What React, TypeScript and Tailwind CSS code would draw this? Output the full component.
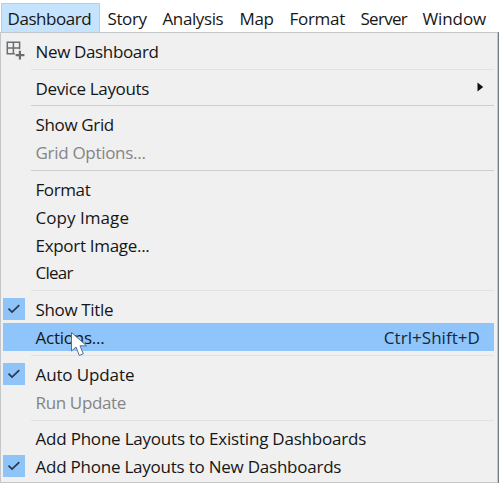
import React from 'react';

type Item = {
  label: string;
  tracking: string;
  checked?: boolean;
  disabled?: boolean;
  active?: boolean;
  submenu?: boolean;
  shortcut?: string;
  icon?: boolean;
};

const menus = [
  { label: 'Story', cls: 'w-[55px] tracking-[-0.4px]' },
  { label: 'Analysis', cls: 'w-[77px] tracking-[-0.4px]' },
  { label: 'Map', cls: 'w-[50px] tracking-[-0.4px]' },
  { label: 'Format', cls: 'w-[71px] tracking-[-0.3px]' },
  { label: 'Server', cls: 'w-[62px] tracking-[-0.7px]' },
  { label: 'Window', cls: 'tracking-[-0.1px]' },
];

const groups: Item[][] = [
  [{ label: 'New Dashboard', tracking: 'tracking-[-0.35px]', icon: true }],
  [{ label: 'Device Layouts', tracking: 'tracking-[-0.35px]', submenu: true }],
  [
    { label: 'Show Grid', tracking: 'tracking-[-0.35px]' },
    { label: 'Grid Options...', tracking: 'tracking-[-0.3px]', disabled: true },
  ],
  [
    { label: 'Format', tracking: 'tracking-[-0.4px]' },
    { label: 'Copy Image', tracking: 'tracking-[0.05px]' },
    { label: 'Export Image...', tracking: 'tracking-[-0.3px]' },
    { label: 'Clear', tracking: 'tracking-[-0.75px]' },
  ],
  [
    { label: 'Show Title', tracking: 'tracking-[-0.35px]', checked: true },
    { label: 'Actions...', tracking: 'tracking-[-0.25px]', active: true, shortcut: 'Ctrl+Shift+D' },
  ],
  [
    { label: 'Auto Update', tracking: 'tracking-[-0.12px]', checked: true },
    { label: 'Run Update', tracking: 'tracking-[-0.35px]', disabled: true },
  ],
  [
    { label: 'Add Phone Layouts to Existing Dashboards', tracking: 'tracking-[-0.21px]' },
    { label: 'Add Phone Layouts to New Dashboards', tracking: 'tracking-[-0.23px]', checked: true },
  ],
];

function NewDashboardIcon() {
  return (
    <svg width="20" height="20" viewBox="0 0 20 20" fill="none" stroke="#6c6c6c" className="ml-[2px] -translate-y-px">
      <path d="M9.8 13.8H2.3V2.3H14.6V9.2M2.3 8H14.6M8.4 2.3V13.8" strokeWidth="1.5" />
      <path d="M14.9 10.8V19.4M10.6 15.1H19.4" strokeWidth="2.2" />
    </svg>
  );
}

function Check() {
  return (
    <span className="flex h-[22px] w-[22px] items-center justify-center bg-[#8fc4f9]">
      <svg width="14" height="10" viewBox="0 0 14 10" fill="none" stroke="#26384b" strokeWidth="1.7">
        <path d="M1.5 4.7L5 8L12.3 1.2" />
      </svg>
    </span>
  );
}

function Row({ item }: { item: Item }) {
  return (
    <div className={`flex h-[27.9px] items-center ${item.active ? 'bg-[#8fc5fa]' : ''}`}>
      <div className="flex w-[32.5px] shrink-0 items-center">
        {item.icon && <NewDashboardIcon />}
        {item.checked && <Check />}
      </div>
      <span className={`pt-[1.8px] whitespace-nowrap ${item.tracking} ${item.disabled ? 'text-[#858585]' : ''}`}>{item.label}</span>
      {item.shortcut && <span className="mr-[14px] ml-auto pt-[1.8px] tracking-[0.05px] text-[#15283c]">{item.shortcut}</span>}
      {item.submenu && (
        <svg width="7" height="10" viewBox="0 0 7 10" className="mr-[10px] ml-auto -translate-y-px">
          <path d="M0.5 0.5L6.2 5L0.5 9.5Z" fill="#111" />
        </svg>
      )}
    </div>
  );
}

export default function App() {
  return (
    <div className="relative h-[483px] w-[499px] overflow-hidden bg-white font-['Open_Sans','Noto_Sans',sans-serif] text-[17px] leading-[24px] text-[#161616]">
      <div className="flex h-[32px] items-end">
        <div className="ml-px flex h-[29px] w-[99px] items-center border border-b-0 border-[#a3d3fb] bg-[#c5e3fc] pt-[2px] pl-[5.5px]">
          <span className="tracking-[-0.45px]">Dashboard</span>
        </div>
        <div className="flex h-[29px] items-center pt-[3px] pl-[7.5px]">
          {menus.map((m) => (
            <span key={m.label} className={`shrink-0 whitespace-nowrap ${m.cls}`}>{m.label}</span>
          ))}
        </div>
      </div>
      <div className="flex h-[451px] bg-[#6f7c80]">
        <div className="w-[498px] border border-[#c3c7ca] bg-[#f0f0f0] pt-[4px] pr-[3px] pl-[2px]">
          {groups.map((group, i) => (
            <React.Fragment key={i}>
              {i > 0 && (
                <div className="flex h-[8.8px] items-center">
                  <div className={`ml-[28px] h-px flex-1 ${i === 2 || i === 3 ? 'bg-[#cecece]' : 'bg-[#e2e2e2]'}`} />
                </div>
              )}
              {group.map((item) => (
                <Row key={item.label} item={item} />
              ))}
            </React.Fragment>
          ))}
        </div>
      </div>
      <svg className="absolute top-[331px] left-[70px]" width="19" height="27" viewBox="0 0 19 27">
        <path d="M1.5 1.5V20L6 16L9.3 24.5L13.3 22.8L10 14.8H16.5Z" fill="#fff" stroke="#54708c" strokeWidth="1" />
      </svg>
    </div>
  );
}
